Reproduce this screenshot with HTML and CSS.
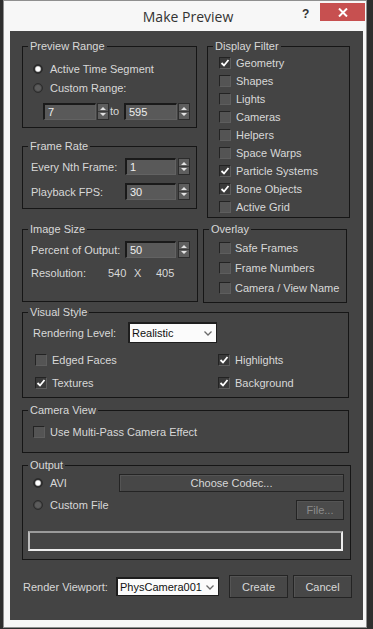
FILE: index.html
```html
<!DOCTYPE html>
<html lang="en">
<head>
    <meta charset="UTF-8">
    <meta name="viewport" content="width=device-width, initial-scale=1.0">
    <title>Make Preview</title>
    <link rel="stylesheet" href="styles.css">
</head>
<body>
    <div class="window">
        <div class="titlebar">
            <div class="title">Make Preview</div>
            <div class="help">?</div>
            <div class="close">
                <svg width="10" height="9" viewBox="0 0 10 9"><path d="M1 .5 9 8.5M9 .5 1 8.5" stroke="#fff" stroke-width="2"/></svg>
            </div>
        </div>

        <div class="panel">
            <div class="top-row">
                <div class="col-left">
                    <div class="group range">
                        <span class="group-title">Preview Range</span>
                        <div class="radio-line"><span class="radio on"></span>Active Time Segment</div>
                        <div class="radio-line"><span class="radio"></span>Custom Range:</div>
                        <div class="range-fields">
                            <span class="field wide">7</span>
                            <span class="spin tight"><svg width="10" height="15" viewBox="0 0 10 15"><path d="M2 6h6L5 3zM2 9h6l-3 3z" fill="#e2e2e2"/><path d="M0 7.5h10" stroke="#3a3a3a"/></svg></span>
                            <span class="to">to</span>
                            <span class="field wide">595</span>
                            <span class="spin tight"><svg width="10" height="15" viewBox="0 0 10 15"><path d="M2 6h6L5 3zM2 9h6l-3 3z" fill="#e2e2e2"/><path d="M0 7.5h10" stroke="#3a3a3a"/></svg></span>
                        </div>
                    </div>

                    <div class="group frame-rate">
                        <span class="group-title">Frame Rate</span>
                        <div class="field-row">
                            <span class="field-label">Every Nth Frame:</span>
                            <span class="field">1</span>
                            <span class="spin"><svg width="10" height="15" viewBox="0 0 10 15"><path d="M2 6h6L5 3zM2 9h6l-3 3z" fill="#e2e2e2"/><path d="M0 7.5h10" stroke="#3a3a3a"/></svg></span>
                        </div>
                        <div class="field-row">
                            <span class="field-label">Playback FPS:</span>
                            <span class="field">30</span>
                            <span class="spin"><svg width="10" height="15" viewBox="0 0 10 15"><path d="M2 6h6L5 3zM2 9h6l-3 3z" fill="#e2e2e2"/><path d="M0 7.5h10" stroke="#3a3a3a"/></svg></span>
                        </div>
                    </div>
                </div>

                <div class="group display-filter">
                    <span class="group-title">Display Filter</span>
                    <div class="check-line"><span class="check on"><svg width="10" height="10" viewBox="0 0 10 10"><path d="M1.5 5 4 7.5 8.5 2" fill="none" stroke="#fff" stroke-width="1.8"/></svg></span>Geometry</div>
                    <div class="check-line"><span class="check"></span>Shapes</div>
                    <div class="check-line"><span class="check"></span>Lights</div>
                    <div class="check-line"><span class="check"></span>Cameras</div>
                    <div class="check-line"><span class="check"></span>Helpers</div>
                    <div class="check-line"><span class="check"></span>Space Warps</div>
                    <div class="check-line"><span class="check on"><svg width="10" height="10" viewBox="0 0 10 10"><path d="M1.5 5 4 7.5 8.5 2" fill="none" stroke="#fff" stroke-width="1.8"/></svg></span>Particle Systems</div>
                    <div class="check-line"><span class="check on"><svg width="10" height="10" viewBox="0 0 10 10"><path d="M1.5 5 4 7.5 8.5 2" fill="none" stroke="#fff" stroke-width="1.8"/></svg></span>Bone Objects</div>
                    <div class="check-line"><span class="check"></span>Active Grid</div>
                </div>
            </div>

            <div class="mid-row">
                <div class="group image-size">
                    <span class="group-title">Image Size</span>
                    <div class="field-row">
                        <span class="field-label">Percent of Output:</span>
                        <span class="field">50</span>
                        <span class="spin"><svg width="10" height="15" viewBox="0 0 10 15"><path d="M2 6h6L5 3zM2 9h6l-3 3z" fill="#e2e2e2"/><path d="M0 7.5h10" stroke="#3a3a3a"/></svg></span>
                    </div>
                    <div class="res-row">
                        <span class="res-label">Resolution:</span>
                        <span class="res-val">540</span>
                        <span class="res-x">X</span>
                        <span>405</span>
                    </div>
                </div>

                <div class="group overlay">
                    <span class="group-title">Overlay</span>
                    <div class="check-line tall"><span class="check"></span>Safe Frames</div>
                    <div class="check-line tall"><span class="check"></span>Frame Numbers</div>
                    <div class="check-line tall"><span class="check"></span>Camera / View Name</div>
                </div>
            </div>

            <div class="group visual-style">
                <span class="group-title">Visual Style</span>
                <div class="level-row">
                    <span class="level-label">Rendering Level:</span>
                    <div class="select level-select">
                        <span>Realistic</span>
                        <svg width="8" height="5" viewBox="0 0 8 5"><path d="M.5.5 4 4 7.5.5" fill="none" stroke="#6a6a6a" stroke-width="1.3"/></svg>
                    </div>
                </div>
                <div class="style-checks">
                    <div class="check-line"><span class="check"></span>Edged Faces</div>
                    <div class="check-line"><span class="check on"><svg width="10" height="10" viewBox="0 0 10 10"><path d="M1.5 5 4 7.5 8.5 2" fill="none" stroke="#fff" stroke-width="1.8"/></svg></span>Highlights</div>
                    <div class="check-line"><span class="check on"><svg width="10" height="10" viewBox="0 0 10 10"><path d="M1.5 5 4 7.5 8.5 2" fill="none" stroke="#fff" stroke-width="1.8"/></svg></span>Textures</div>
                    <div class="check-line"><span class="check on"><svg width="10" height="10" viewBox="0 0 10 10"><path d="M1.5 5 4 7.5 8.5 2" fill="none" stroke="#fff" stroke-width="1.8"/></svg></span>Background</div>
                </div>
            </div>

            <div class="group camera-view">
                <span class="group-title">Camera View</span>
                <div class="check-line tall"><span class="check"></span>Use Multi-Pass Camera Effect</div>
            </div>

            <div class="group output">
                <span class="group-title">Output</span>
                <div class="output-row">
                    <div class="radio-line avi"><span class="radio on"></span>AVI</div>
                    <div class="btn codec">Choose Codec...</div>
                </div>
                <div class="output-row second">
                    <div class="radio-line custom"><span class="radio"></span>Custom File</div>
                    <div class="btn dim file-btn">File...</div>
                </div>
                <div class="progress"></div>
            </div>

            <div class="bottom-row">
                <span class="viewport-label">Render Viewport:</span>
                <div class="select viewport-select">
                    <span>PhysCamera001</span>
                    <svg width="8" height="5" viewBox="0 0 8 5"><path d="M.5.5 4 4 7.5.5" fill="none" stroke="#6a6a6a" stroke-width="1.3"/></svg>
                </div>
                <div class="btn action create">Create</div>
                <div class="btn action">Cancel</div>
            </div>
        </div>
    </div>
</body>
</html>
```

FILE: styles.css
```css
* {
    box-sizing: border-box;
}
body {
    margin: 0;
    background: #2e2e2e;
    font-family: "Liberation Sans", Arial, sans-serif;
    font-size: 11px;
    color: #d8d8d8;
}
.window {
    margin-left: 3px;
    width: 364px;
    height: 628px;
    border: 1px solid #8f8f8f;
    background: #f7f7f7;
}
.titlebar {
    display: flex;
    height: 30px;
}
.title {
    flex: 1;
    padding-left: 70px;
    text-align: center;
    font-family: "Open Sans", sans-serif;
    font-size: 14px;
    line-height: 31px;
    color: #333;
}
.help {
    width: 12px;
    margin-right: 6px;
    margin-top: 6px;
    font-size: 12px;
    font-weight: bold;
    color: #333;
}
.close {
    width: 45px;
    height: 18px;
    margin-top: 2px;
    margin-right: 1px;
    background: #c75050;
    display: flex;
    align-items: center;
    justify-content: center;
}
.panel {
    margin-left: 6px;
    width: 353px;
    height: 589px;
    background: #444;
    padding: 15px 0 0 12px;
}

/* group boxes */
.group {
    position: relative;
    border: 1px solid #161616;
}
.group-title {
    position: absolute;
    top: -8px;
    left: 5px;
    padding: 0 2px;
    background: #444;
    line-height: 14px;
}
.top-row,
.mid-row {
    display: flex;
    align-items: flex-start;
}
.mid-row {
    margin-top: 11px;
}
.col-left {
    width: 175px;
}
.range {
    height: 82px;
    padding: 12px 0 0 10px;
}
.frame-rate {
    margin-top: 18px;
    height: 63px;
    padding: 11px 0 0 8px;
}
.display-filter {
    width: 143px;
    height: 172px;
    margin-left: 10px;
    padding: 7px 0 0 11px;
}
.image-size {
    width: 176px;
    height: 73px;
    padding: 11px 0 0 8px;
}
.overlay {
    width: 144px;
    height: 74px;
    margin-left: 5px;
    padding: 8px 0 0 15px;
}
.overlay .check {
    margin-right: 4px;
}
.visual-style {
    margin-top: 9px;
    width: 327px;
    height: 86px;
    padding: 9px 0 0 10px;
}
.camera-view {
    margin-top: 12px;
    width: 327px;
    height: 43px;
    padding: 11px 0 0 10px;
}
.output {
    margin-top: 12px;
    width: 329px;
    height: 95px;
    padding: 8px 0 0 10px;
}

/* radios and checks */
.radio-line,
.check-line {
    display: flex;
    align-items: center;
    height: 19px;
}
.check-line {
    height: 18px;
}
.check-line.tall {
    height: 20px;
}
.radio {
    width: 10px;
    height: 10px;
    margin-right: 7px;
    border-radius: 50%;
    border: 1px solid #2c2c2c;
    background: radial-gradient(circle, #5c5c5c 0 2.5px, #3c3c3c 4px);
}
.radio.on {
    background: radial-gradient(circle, #fff 0 2px, #bbb 2.6px, #2a2a2a 3.6px);
}
.check {
    width: 12px;
    height: 12px;
    margin-right: 5px;
    border: 1px solid;
    border-color: #232323 #5e5e5e #5e5e5e #232323;
    background: #545454;
    display: flex;
    align-items: center;
    justify-content: center;
}
.check.on {
    background: #3a3a3a;
}

/* spinner fields */
.range-fields {
    display: flex;
    margin-top: 6px;
    margin-left: 10px;
    height: 17px;
}
.field-row {
    display: flex;
    align-items: center;
    height: 17px;
}
.field-row + .field-row {
    margin-top: 8px;
}
.field-label {
    width: 94px;
}
.field {
    width: 51px;
    height: 17px;
    padding-left: 3px;
    line-height: 14px;
    color: #eee;
    background: #595959;
    border: solid #1a1a1a;
    border-width: 2px 1px 1px 2px;
    border-right-color: #626262;
    border-bottom-color: #626262;
}
.field.wide {
    width: 53px;
}
.spin {
    width: 12px;
    height: 17px;
    margin-left: 2px;
    background: #5e5e5e;
    border: 1px solid #2c2c2c;
    display: flex;
}
.spin.tight {
    margin-left: 1px;
}
.to {
    width: 14px;
    margin-left: 1px;
    line-height: 17px;
}
.res-row {
    display: flex;
    margin-top: 7px;
    line-height: 17px;
}
.res-label {
    width: 77px;
}
.res-val {
    width: 26px;
}
.res-x {
    width: 22px;
}

/* visual style */
.level-row {
    display: flex;
    align-items: center;
    height: 21px;
}
.level-label {
    width: 95px;
}
.select {
    display: flex;
    align-items: center;
    justify-content: space-between;
    padding: 0 4px 0 2px;
    color: #111;
    background: #fbfbfb;
    border: solid #1e1e1e;
    border-width: 2px 1px 1px 2px;
}
.level-select {
    width: 89px;
    height: 21px;
}
.style-checks {
    display: grid;
    grid-template-columns: 183px auto;
    grid-auto-rows: 23px;
    margin-top: 5px;
    margin-left: 2px;
}
.style-checks .check-line {
    height: 23px;
}

/* output */
.output-row {
    display: flex;
    height: 18px;
}
.output-row.second {
    margin-top: 4px;
    height: 24px;
    justify-content: space-between;
}
.avi {
    width: 86px;
    height: 18px;
}
.custom {
    height: 18px;
}
.btn {
    display: flex;
    align-items: center;
    justify-content: center;
    color: #d8d8d8;
    background: #474747;
    border: 1px solid #242424;
    box-shadow: inset 1px 1px 0 #545454;
}
.btn.dim {
    color: #8c8c8c;
    background: #4b4b4b;
}
.codec {
    width: 225px;
    height: 18px;
}
.file-btn {
    width: 48px;
    height: 20px;
    margin-top: 4px;
    margin-right: 6px;
}
.progress {
    margin-top: 11px;
    margin-left: -5px;
    width: 315px;
    height: 20px;
    border: 2px solid #ececec;
    border-top-color: #9a9a9a;
    border-left-color: #bdbdbd;
}

/* bottom */
.bottom-row {
    display: flex;
    align-items: center;
    height: 23px;
    margin-top: 15px;
}
.viewport-label {
    width: 93px;
    margin-left: 1px;
}
.viewport-select {
    width: 103px;
    height: 19px;
}
.action {
    width: 59px;
    height: 23px;
    margin-left: 5px;
}
.action.create {
    margin-left: 10px;
}
```
